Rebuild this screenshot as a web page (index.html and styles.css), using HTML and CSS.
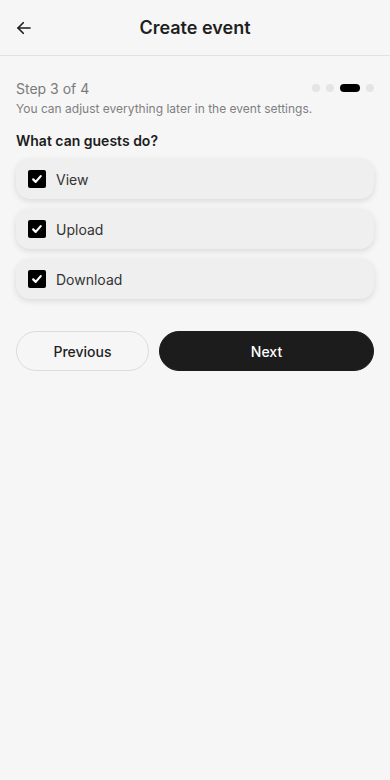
FILE: index.html
```html
<!DOCTYPE html>
<html lang="en">
<head>
  <meta charset="UTF-8" />
  <title>Create event</title>
  <link rel="stylesheet" href="styles.css">
</head>
<body>
  <!-- Header -->
  <div class="topbar">
    <button class="back-btn" aria-label="Back">
      <svg width="18" height="18" viewBox="0 0 24 24" fill="none" stroke="#1c1c1c" stroke-width="2.2" stroke-linecap="round" stroke-linejoin="round">
        <path d="M20 12H4"/>
        <path d="M11 5l-7 7 7 7"/>
      </svg>
    </button>
    <h1>Create event</h1>
  </div>

  <!-- Main content -->
  <div class="content">
    <div class="step-row">
      <span class="step-label">Step 3 of 4</span>
      <div class="dots">
        <span class="dot"></span>
        <span class="dot"></span>
        <span class="dot active"></span>
        <span class="dot"></span>
      </div>
    </div>
    <p class="hint">You can adjust everything later in the event settings.</p>

    <h2>What can guests do?</h2>

    <div class="options">
      <label class="option">
        <span class="check">
          <svg width="12" height="12" viewBox="0 0 12 12" fill="none" stroke="#fff" stroke-width="2.2" stroke-linecap="round" stroke-linejoin="round"><path d="M2.2 6.4l2.5 2.5 5-5.8"/></svg>
        </span>
        <span>View</span>
      </label>
      <label class="option">
        <span class="check">
          <svg width="12" height="12" viewBox="0 0 12 12" fill="none" stroke="#fff" stroke-width="2.2" stroke-linecap="round" stroke-linejoin="round"><path d="M2.2 6.4l2.5 2.5 5-5.8"/></svg>
        </span>
        <span>Upload</span>
      </label>
      <label class="option">
        <span class="check">
          <svg width="12" height="12" viewBox="0 0 12 12" fill="none" stroke="#fff" stroke-width="2.2" stroke-linecap="round" stroke-linejoin="round"><path d="M2.2 6.4l2.5 2.5 5-5.8"/></svg>
        </span>
        <span>Download</span>
      </label>
    </div>

    <div class="actions">
      <button class="btn btn-outline">Previous</button>
      <button class="btn btn-dark">Next</button>
    </div>
  </div>
</body>
</html>
```

FILE: styles.css
```css
 body {
   font-family: Inter, 'Noto Sans', sans-serif;
   background: #f6f6f6;
   color: #1c1c1c;
   margin: 0;
 }

 /* Header */
 .topbar {
   position: relative;
   height: 55px;
   display: flex;
   align-items: center;
   justify-content: center;
   border-bottom: 1px solid #e2e2e2;
 }
 .topbar h1 {
   margin: 0;
   font-size: 18px;
   font-weight: 600;
   color: #1f1f1f;
 }
 .back-btn {
   position: absolute;
   left: 11px;
   top: 18px;
   padding: 0;
   width: 26px;
   height: 20px;
   display: flex;
   align-items: center;
   justify-content: center;
   background: none;
   border: none;
 }

 /* Content */
 .content {
   padding: 23px 16px;
 }
 .step-row {
   display: flex;
   align-items: center;
   justify-content: space-between;
   height: 18px;
 }
 .step-label {
   font-size: 14px;
   color: #7a7a7a;
 }
 .dots {
   display: flex;
   align-items: center;
   gap: 6px;
 }
 .dot {
   width: 8px;
   height: 8px;
   border-radius: 4px;
   background: #e4e4e4;
 }
 .dot.active {
   width: 20px;
   background: #000;
 }
 .hint {
   margin: 4px 0 0;
   font-size: 12px;
   color: #7f7f7f;
 }
 .content h2 {
   margin: 16px 0 10px;
   font-size: 14px;
   font-weight: 600;
   color: #1c1c1c;
 }

 /* Options */
 .options {
   display: flex;
   flex-direction: column;
   gap: 10px;
 }
 .option {
   display: flex;
   align-items: center;
   gap: 10px;
   height: 40px;
   padding: 0 12px;
   border-radius: 14px;
   background: #efefef;
   box-shadow: 0 2px 6px rgba(0, 0, 0, 0.12);
   font-size: 14px;
   color: #333;
 }
 .check {
   width: 18px;
   height: 18px;
   border-radius: 2px;
   background: #000;
   display: flex;
   align-items: center;
   justify-content: center;
 }

 /* Buttons */
 .actions {
   display: grid;
   grid-template-columns: 133px 1fr;
   gap: 10px;
   margin-top: 32px;
 }
 .btn {
   height: 40px;
   border-radius: 20px;
   font-family: inherit;
   font-size: 14px;
   font-weight: 500;
 }
 .btn-outline {
   background: transparent;
   border: 1px solid #dcdcdc;
   color: #1f1f1f;
 }
 .btn-dark {
   background: #1c1c1c;
   border: 1px solid #1c1c1c;
   color: #fff;
 }
```
